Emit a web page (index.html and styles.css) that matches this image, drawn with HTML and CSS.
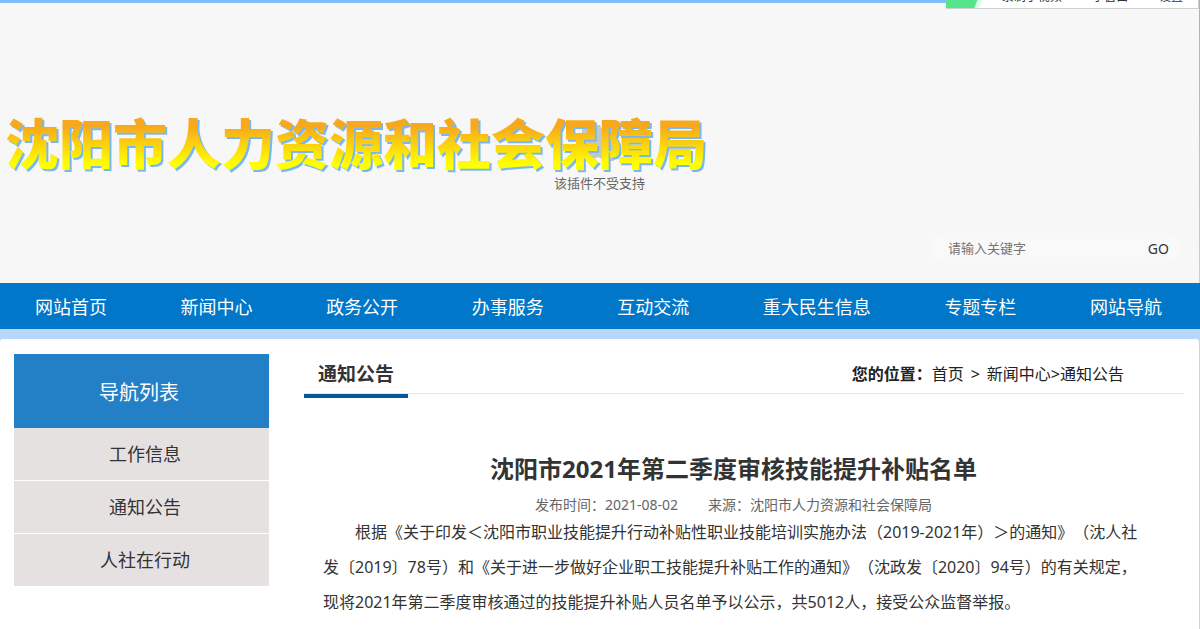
FILE: index.html
```html
<!DOCTYPE html>
<html lang="zh-CN">
<head>
    <meta charset="UTF-8">
    <meta name="viewport" content="width=device-width, initial-scale=1.0">
    <title>沈阳市人力资源和社会保障局</title>
    <link rel="stylesheet" href="styles.css">
</head>
<body>
    <div class="player-bar">
        <span class="player-logo"></span>
        <button type="button">录制小视频</button>
        <button type="button">小窗口</button>
        <button type="button">设置</button>
    </div>

    <header class="header">
        <div class="plugin">
            <svg class="plugin-icon" width="40" height="38" viewBox="0 0 40 38">
                <path fill="#c6c6c6" d="M2 3h11c0-5 8-5 8 0h13v12c6 0 6 9 0 9v12H22c0-5-8-5-8 0H2V25c5 0 5-9 0-9z"/>
            </svg>
            <p>该插件不受支持</p>
        </div>
        <h1 class="site-name">沈阳市人力资源和社会保障局</h1>
        <form class="search">
            <input type="text" placeholder="请输入关键字" aria-label="请输入关键字">
            <button type="button">GO</button>
        </form>
    </header>

    <nav class="nav">
        <a href="#">网站首页</a>
        <a href="#">新闻中心</a>
        <a href="#">政务公开</a>
        <a href="#">办事服务</a>
        <a href="#">互动交流</a>
        <a href="#">重大民生信息</a>
        <a href="#">专题专栏</a>
        <a href="#">网站导航</a>
    </nav>

    <main class="main">
        <aside class="sidebar">
            <h2>导航列表</h2>
            <ul>
                <li><a href="#">工作信息</a></li>
                <li><a href="#">通知公告</a></li>
                <li><a href="#">人社在行动</a></li>
            </ul>
        </aside>

        <section class="content">
            <div class="content-head">
                <h2>通知公告</h2>
                <div class="crumbs"><b>您的位置：</b><a class="home" href="#">首页</a>&gt;<a class="parent" href="#">新闻中心</a>&gt;<a href="#">通知公告</a></div>
            </div>
            <article class="article">
                <h3>沈阳市2021年第二季度审核技能提升补贴名单</h3>
                <div class="meta">
                    <span>发布时间：2021-08-02</span>
                    <span>来源：沈阳市人力资源和社会保障局</span>
                </div>
                <p>根据《关于印发＜沈阳市职业技能提升行动补贴性职业技能培训实施办法（2019-2021年）＞的通知》（沈人社发〔2019〕78号）和《关于进一步做好企业职工技能提升补贴工作的通知》（沈政发〔2020〕94号）的有关规定，现将2021年第二季度审核通过的技能提升补贴人员名单予以公示，共5012人，接受公众监督举报。</p>
            </article>
        </section>
    </main>
</body>
</html>
```
FILE: styles.css
```css
* {
    box-sizing: border-box;
    margin: 0;
    padding: 0;
}

body {
    font-family: "Noto Sans", "Noto Sans CJK SC", sans-serif;
    font-size: 16px;
    color: #333;
    background: linear-gradient(#80bbfc, #b8d8fb 329px);
    padding-top: 3px;
    text-spacing-trim: space-all;
}

a {
    color: inherit;
    text-decoration: none;
}

ul {
    list-style: none;
}

button,
input {
    font-family: inherit;
    border: none;
    background: none;
    color: inherit;
}

/* floating bar, partly above the window */
.player-bar {
    position: absolute;
    top: -17px;
    right: 1px;
    z-index: 2;
    width: 253px;
    height: 26px;
    display: flex;
    align-items: flex-end;
    justify-content: space-between;
    padding: 0 15px 3px 0;
    background: #fff;
    border: 1px solid #ccd0d0;
    border-left: none;
}

.player-bar button {
    font-size: 12px;
    line-height: 16px;
}

.player-logo {
    width: 40px;
    height: 21px;
    margin: 0 -15px -3px 0;
    background: linear-gradient(110deg, #56e58c 75%, #c9f8e0 76%, #fff 90%);
}

.header {
    position: relative;
    height: 280px;
    margin-right: 1px;
    padding-top: 122px;
    background: #f7f7f7;
}

.plugin {
    text-align: center;
    font-size: 13px;
    line-height: 20px;
    color: #666;
}

.plugin-icon {
    display: block;
    margin: 0 auto 10px;
}

.site-name {
    position: absolute;
    left: 5px;
    top: 111px;
    font-size: 54px;
    line-height: 60px;
    font-weight: 900;
    white-space: nowrap;
    color: transparent;
    background: linear-gradient(#f7a81c 20%, #ff0 84%);
    -webkit-background-clip: text;
    background-clip: text;
    filter: drop-shadow(2px 2px 0 #78b8f0);
}

.search {
    position: absolute;
    right: 20px;
    bottom: 20px;
    width: 250px;
    height: 30px;
    display: flex;
    align-items: center;
    padding: 0 10px 0 19px;
    border-radius: 15px;
    background: #f9f9f9;
    font-size: 13px;
}

.search input {
    flex: 1;
    min-width: 0;
    font-size: 13px;
    outline: none;
}

.search input::placeholder {
    color: #757575;
}

.search button {
    font-size: 14px;
}

.nav {
    display: flex;
    justify-content: space-between;
    padding: 2px 38px 0 35px;
    background: #0077c8;
    color: #fff;
    font-size: 18px;
    line-height: 44px;
    margin-bottom: 10px;
}

.main {
    display: flex;
    align-items: flex-start;
    gap: 35px;
    min-height: 290px;
    margin-right: 1px;
    padding: 15px 15px 0 14px;
    border-radius: 3px 3px 0 0;
    background: #fff;
}

.sidebar {
    flex: 0 0 255px;
    text-align: center;
}

.sidebar h2 {
    padding: 4px 5px 0 0;
    background: #2480c6;
    color: #fff;
    font-size: 20px;
    font-weight: normal;
    line-height: 70px;
}

.sidebar li {
    padding-left: 7px;
    background: #e5e1e0;
    font-size: 18px;
    line-height: 52px;
}

.sidebar li + li {
    border-top: 1px solid #fff;
}

.content {
    flex: 1;
}

.content-head {
    display: flex;
    justify-content: space-between;
    height: 40px;
    padding-right: 60px;
    border-bottom: 1px solid #e5e5e5;
    line-height: 40px;
}

.content-head h2 {
    height: 44px;
    padding: 0 14px;
    border-bottom: 4px solid #00599c;
    font-size: 19px;
}

.crumbs {
    color: #222;
}

.crumbs .home {
    margin-right: 7px;
}

.crumbs .parent {
    margin-left: 7px;
}

.article {
    padding: 55px 40px 0 19px;
}

.article h3 {
    font-size: 24px;
    line-height: 40px;
    text-align: center;
}

.meta {
    display: flex;
    justify-content: center;
    gap: 30px;
    padding-top: 6px;
    font-size: 14px;
    line-height: 20px;
    color: #666;
}

.article p {
    text-indent: 2em;
    line-height: 35px;
}
```
